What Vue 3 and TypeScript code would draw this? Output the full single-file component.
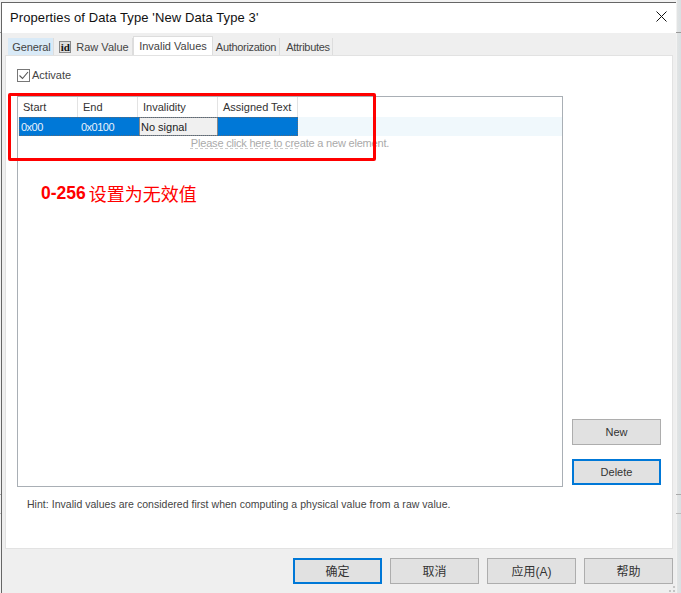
<script setup lang="ts">
const tabs = [
  { label: 'General', cls: 'tab-general' },
  { label: 'Raw Value', cls: 'tab-raw', icon: true },
  { label: 'Invalid Values', cls: 'tab-active' },
  { label: 'Authorization', cls: 'tab-auth' },
  { label: 'Attributes', cls: 'tab-attr' },
]
const heads = [
  { label: 'Start', w: 60 },
  { label: 'End', w: 60 },
  { label: 'Invalidity', w: 80 },
  { label: 'Assigned Text', w: 80 },
]
</script>

<template>
  <div class="screen">
    <div class="window">
      <header class="titlebar">
        <span class="title">Properties of Data Type 'New Data Type 3'</span>
        <svg class="close" width="11" height="11" viewBox="0 0 11 11">
          <path d="M0.5 0.5 L10.5 10.5 M10.5 0.5 L0.5 10.5" stroke="#111" stroke-width="1" fill="none" />
        </svg>
      </header>
      <div class="body">
        <nav class="tabs">
          <div v-for="t in tabs" :key="t.label" class="tab" :class="t.cls">
            <span v-if="t.icon" class="id-icon">id</span>
            <span>{{ t.label }}</span>
          </div>
        </nav>
        <section class="page">
          <label class="activate">
            <span class="check">
              <svg width="11" height="11" viewBox="0 0 11 11">
                <path d="M1.5 5.5 L4.5 8.5 L10 2" stroke="#555" stroke-width="1.1" fill="none" />
              </svg>
            </span>
            <span>Activate</span>
          </label>
          <div class="middle">
            <div class="grid-box">
              <div class="grid-head">
                <div v-for="h in heads" :key="h.label" class="head-cell" :style="{ width: h.w + 'px' }">{{ h.label }}</div>
              </div>
              <div class="grid-row">
                <div class="sel-group">
                  <div class="cell sel c60">0x00</div>
                  <div class="cell sel c60">0x0100</div>
                  <div class="cell editor">No signal</div>
                  <div class="cell sel c80"></div>
                </div>
              </div>
              <div class="placeholder">Please click here to create a new element.</div>
              <div class="ghost"></div>
              <div class="annotation"><b>0-256</b><span>设置为无效值</span></div>
              <div class="red-box"></div>
            </div>
            <div class="side">
              <button class="btn side-btn">New</button>
              <button class="btn side-btn focus">Delete</button>
            </div>
          </div>
          <p class="hint">Hint: Invalid values are considered first when computing a physical value from a raw value.</p>
        </section>
        <footer class="footer">
          <button class="btn foot-btn focus">确定</button>
          <button class="btn foot-btn">取消</button>
          <button class="btn foot-btn">应用(A)</button>
          <button class="btn foot-btn">帮助</button>
        </footer>
        <svg class="grip" width="7" height="7" viewBox="0 0 7 7">
          <rect x="4" y="0" width="2" height="2" fill="#c4c4c4" />
          <rect x="0" y="4" width="2" height="2" fill="#c4c4c4" />
          <rect x="4" y="4" width="2" height="2" fill="#c4c4c4" />
        </svg>
      </div>
    </div>
  </div>
</template>

<style>
html, body { margin: 0; padding: 0; background: #fff; }
</style>

<style scoped>
.screen {
  width: 681px;
  height: 593px;
  overflow: hidden;
  background:
    linear-gradient(#999, #999) 0 32px / 100% 1px no-repeat,
    linear-gradient(#aaa, #aaa) 0 494px / 100% 1px no-repeat,
    linear-gradient(#bbb, #bbb) 0 513px / 100% 1px no-repeat,
    linear-gradient(90deg, #f2f2f2 0, #f2f2f2 677px, #e2e4e4 677px, #d9e0e3 681px);
  padding: 2px 0 0 1px;
  box-sizing: border-box;
  font-family: "Liberation Sans", "Noto Sans CJK SC", sans-serif;
  color: #333;
}
.window {
  width: 675px;
  height: 591px;
  box-sizing: border-box;
  border-left: 1px solid #666;
  border-top: 1px solid #666;
  display: flex;
  flex-direction: column;
  background: #efefef;
}
.titlebar {
  height: 30px;
  flex: none;
  background: #fff;
  display: flex;
  align-items: center;
  justify-content: space-between;
  padding: 0 9px 2px 8px;
  box-sizing: border-box;
}
.title { font-size: 13px; color: #111; letter-spacing: 0.1px; }
.close { display: block; margin-bottom: 2px; }
.body { position: relative; flex: 1; display: flex; flex-direction: column; padding: 3px 3px 0 3px; }
.tabs { display: flex; height: 19px; align-items: flex-end; font-size: 11px; color: #444; padding-left: 3px; }
.tab { height: 17px; box-sizing: border-box; display: flex; align-items: center; justify-content: center; gap: 5px; border-right: 1px solid #ddd; flex: none; }
.tab-general { width: 46px; background: #d9eaf7; letter-spacing: -0.1px; padding-left: 2px; }
.tab-raw { width: 79px; padding-left: 2px; }
.tab-active { width: 80px; height: 19px; background: #fff; border: 1px solid #ddd; border-bottom: 0; position: relative; }
.tab-auth { width: 67px; letter-spacing: -0.3px; }
.tab-attr { width: 53px; letter-spacing: -0.3px; padding-left: 4px; }
.id-icon { box-sizing: border-box; width: 12px; height: 12px; background: #ddd; border: 1px solid #888; font-size: 11px; line-height: 10px; font-weight: 700; text-align: center; font-family: "Liberation Serif", serif; color: #111; }
.page {
  height: 494px;
  flex: none;
  box-sizing: border-box;
  background: #fff;
  border: 1px solid #e2e2e2;
  padding: 12px 0 0 11px;
  display: flex;
  flex-direction: column;
  font-size: 11px;
}
.activate { display: flex; align-items: center; gap: 2px; height: 14px; color: #444; }
.check { width: 11px; height: 11px; border: 1px solid #777; display: block; }
.check svg { display: block; }
.middle { display: flex; margin-top: 14px; }
.grid-box {
  position: relative;
  width: 546px;
  height: 391px;
  box-sizing: border-box;
  border: 1px solid #a9afb5;
  flex: none;
}
.grid-head { display: flex; height: 20px; }
.head-cell { box-sizing: border-box; border-right: 1px solid #e3e3e3; padding: 4px 0 0 5px; color: #333; }
.grid-row { display: flex; height: 19px; background: #f0f8fc; padding-left: 1px; }
.sel-group { display: flex; outline: 1px dotted #5a6a7a; outline-offset: -1px; }
.cell { box-sizing: border-box; height: 19px; line-height: 20px; padding-left: 2px; }
.sel { background: #0078d7; color: #e8f2fb; letter-spacing: -0.5px; }
.c60 { width: 60px; }
.c80 { width: 80px; }
.editor { width: 79px; background: #f0f0f0; color: #222; border: 1px solid #888; line-height: 18px; padding-left: 1px; }
.placeholder { text-align: center; color: #aaa; line-height: 14px; letter-spacing: -0.2px; }
.ghost {
  position: absolute;
  left: 172px;
  top: 51px;
  width: 108px;
  height: 1px;
  background: repeating-linear-gradient(90deg, #ccc 0, #ccc 3px, transparent 3px, transparent 5px);
}
.annotation { position: absolute; left: 23px; top: 83px; color: #f00; display: flex; align-items: center; gap: 3px; }
.annotation b { font-weight: 700; font-size: 17.5px; }
.annotation span { font-size: 18px; }
.red-box { position: absolute; left: -10px; top: -4px; width: 368px; height: 68px; border: 3px solid #f00; border-radius: 2px; box-sizing: border-box; }
.side { display: flex; flex-direction: column; justify-content: flex-end; gap: 14px; margin-left: 9px; padding-bottom: 2px; }
.btn { box-sizing: border-box; background: #e1e1e1; border: 1px solid #adadad; color: #333; font-family: inherit; font-size: 11px; padding: 0; flex: none; }
.side-btn { width: 89px; height: 26px; }
.focus { border: 2px solid #0078d7; }
.hint { margin: 11px 0 0 10px; color: #444; font-size: 10.5px; letter-spacing: 0.03px; }
.footer { display: flex; gap: 8px; padding: 9px 0 0 288px; }
.foot-btn { width: 89px; height: 26px; font-size: 12px; padding-bottom: 2px; }
.grip { position: absolute; right: 0; bottom: 0; }
</style>
